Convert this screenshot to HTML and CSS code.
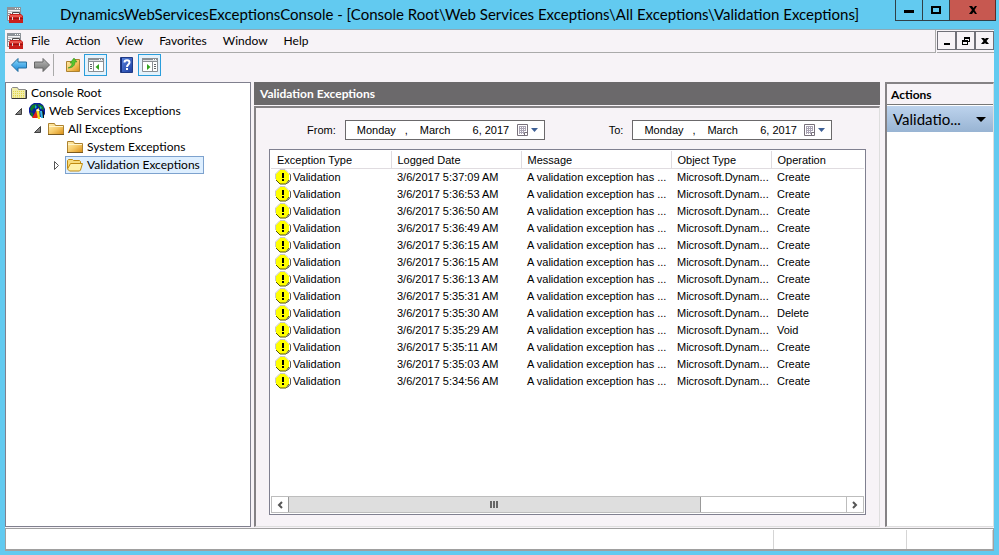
FILE: index.html
```html
<!DOCTYPE html>
<html lang="en">
<head>
<meta charset="utf-8">
<title>DynamicsWebServicesExceptionsConsole</title>
<link rel="stylesheet" href="styles.css">
</head>
<body>
<svg class="defs" aria-hidden="true">
  <defs>
    <linearGradient id="g-folder" x1="0" y1="0" x2="1" y2="1"><stop offset="0" stop-color="#fff0b4"/><stop offset=".5" stop-color="#f6cb6a"/><stop offset="1" stop-color="#d98d14"/></linearGradient>
    <linearGradient id="g-blue" x1="0" y1="0" x2="0" y2="1"><stop offset="0" stop-color="#8fdcfb"/><stop offset="1" stop-color="#1583d8"/></linearGradient>
    <linearGradient id="g-gray" x1="0" y1="0" x2="0" y2="1"><stop offset="0" stop-color="#bdbdbd"/><stop offset="1" stop-color="#6e6e6e"/></linearGradient>
    <linearGradient id="g-help" x1="0" y1="0" x2="1" y2="1"><stop offset="0" stop-color="#5c86e0"/><stop offset="1" stop-color="#1c3da0"/></linearGradient>
    <symbol id="i-console" viewBox="0 0 16 16">
      <path d="M0.500 0.500h13v13h-13z" fill="#f4f4f4" stroke="#8b9096"/>
      <path d="M0 0h14v3H0z" fill="#8d9399"/><path d="M8 1h1v1H8zM10 1h1v1h-1zM12 1h1v1h-1z" fill="#fff"/>
      <path d="M1 4.500h12" stroke="#c4c8cc"/><path d="M1 6.500h3M1 8.500h1" stroke="#8b9096"/>
      <path d="M5.500 8V5.500h7V8" fill="none" stroke="#4b4b4b"/>
      <path d="M3 7h11l2 2v7H2V9z" fill="#c8201c"/><path d="M3 8h11l1 1v1H3z" fill="#e8584e"/>
      <path d="M2 11.500h14" stroke="#9c1210"/><path d="M5 10h1v3H5zM12 10h1v3h-1z" fill="#ddd"/>
    </symbol>
    <symbol id="i-folder" viewBox="0 0 16 16">
      <path d="M0.500 2.500h6l1 2h8v9h-15z" fill="url(#g-folder)" stroke="#ad8230"/><path d="M1 5.500h14" stroke="#fff5cb"/><path d="M0 13.500h16" stroke="#7a5a20"/>
    </symbol>
    <symbol id="i-open" viewBox="0 0 16 16">
      <path d="M0.500 11.500v-8l1-1h4l1 1h6l1 1v3" fill="#f8dc7c" stroke="#c08a10"/>
      <path d="M3.500 6.500h12l-2 6.500-1 1h-10l-2-2z" fill="#fff1a9" stroke="#c08a10"/>
    </symbol>
    <symbol id="i-root" viewBox="0 0 16 16">
      <path d="M0.500 13.500v-10l1-1h5l1 2h7v9z" fill="#f1edaa" stroke="#8a8a8a"/><path d="M1 13.500h14.500V5" fill="none" stroke="#333"/>
      <path d="M2 6.500h12M2 8.500h12M2 10.500h12M2 12h12" stroke="#e1d64b" stroke-dasharray="1 1"/>
    </symbol>
    <symbol id="i-globe" viewBox="0 0 16 16">
      <path d="M5 0h6l3 2 2 4v5l-2 3H4L1 12 0 9V5l2-3z" fill="#0a1f9c"/>
      <path d="M3 2l5-1-1 3-3 2-1 3-2-3zM9 1l5 2 1 4-3-1-3-3zM1 9l3 1v4l-2-1z" fill="#117a28"/>
      <path d="M6 2l2 2-2 2zM11 3l2 2-2 1z" fill="#0bb3d8"/>
      <path d="M3 15l4-7 2 7z" fill="#e42218"/><path d="M7 7l3-2 1 11H9z" fill="#f7dc18"/><path d="M11 8h3v7h-2z" fill="#37bce8"/><path d="M7 7l2-1 2 2H9z" fill="#fff"/><path d="M13 7l2 2v6h-1z" fill="#111"/>
    </symbol>
    <symbol id="i-warn" viewBox="0 0 16 16">
      <path d="M14.500 4.500l1 1.500v5l-3 3.500" fill="none" stroke="#55555a"/>
      <path d="M5 1h5l4 4v6l-4 4H5l-4-4V5z" fill="#ff0"/>
      <path d="M1 11l4 4h6l3-4" fill="none" stroke="#55550a"/><path d="M0.500 10V5L5 0.500h5l3 3" fill="none" stroke="#c8c8c8"/>
      <path d="M7 4h2v5H7zM7 10h2v2H7z" fill="#000"/>
    </symbol>
    <symbol id="i-pane" viewBox="0 0 16 16">
      <path d="M0.500 1.500h15v13h-15z" fill="#fff" stroke="#8a8f94"/><path d="M0 1h16v4H0z" fill="#8a8f94"/><path d="M1 3.500h14" stroke="#dfe2e5"/><path d="M11 2h1v1h-1zM13 2h1v1h-1z" fill="#fff"/>
    </symbol>
    <symbol id="i-cal" viewBox="0 0 12 12">
      <path d="M0.500 0.500h10v11h-10z" fill="#fff" stroke="#77707a"/><path d="M2 2h7v1H2zM2 4h7v1H2zM2 6h7v1H2zM2 8h5v1H2z" fill="#aaa4b4"/><path d="M2 2h1v8H2zM4 2h1v8H4zM6 2h1v8H6zM8 2h1v5H8z" fill="#aaa4b4"/><path d="M7.500 11V8.500H10" fill="none" stroke="#77707a"/>
    </symbol>
    <symbol id="i-left" viewBox="0 0 16 16"><path d="M0.500 8L7 1.500V5h8.500v6H7v3.500z" fill="url(#g-blue)" stroke="#256f9f"/></symbol>
    <symbol id="i-right" viewBox="0 0 16 16"><path d="M15.500 8L9 1.500V5H0.500v6H9v3.500z" fill="url(#g-gray)" stroke="#666"/></symbol>
  </defs>
</svg>
<div class="window">
  <header class="titlebar">
    <svg class="icon"><use href="#i-console"/></svg>
    <h1 class="title">DynamicsWebServicesExceptionsConsole - [Console Root\Web Services Exceptions\All Exceptions\Validation Exceptions]</h1>
    <div class="caption-buttons">
      <button class="cap" aria-label="Minimize"><svg width="12" height="12"><path d="M1 6h10v3H1z"/></svg></button>
      <button class="cap" aria-label="Maximize"><svg width="12" height="12"><path d="M1 2h10v8H1zM3 4v4h6V4z" fill-rule="evenodd"/></svg></button>
      <button class="cap cap-close" aria-label="Close"><svg width="12" height="12"><path d="M2 2h3l1.500 2L8 2h2L7.500 6l2.500 4H8L6.500 8 5 10H2l3-4z"/></svg></button>
    </div>
  </header>
  <div class="frame">
    <div class="menu-row">
      <nav class="menubar" aria-label="Main menu">
        <svg class="icon"><use href="#i-console"/></svg>
        <button>File</button><button>Action</button><button>View</button><button>Favorites</button><button>Window</button><button>Help</button>
      </nav>
      <div class="child-buttons">
        <button aria-label="Minimize child"><svg width="10" height="10"><path d="M2 7h6v2H2z"/></svg></button>
        <button aria-label="Restore child"><svg width="10" height="10"><path d="M3 1h6v5H7V5h1V3H4v1H3zM1 4h6v5H1zM2 6v2h4V6z" fill-rule="evenodd"/></svg></button>
        <button aria-label="Close child"><svg width="10" height="10"><path d="M1 2h3l1 1 1-1h3L6.500 5 9 8H6L5 7 4 8H1l2.500-3z"/></svg></button>
      </div>
    </div>
    <div class="toolbar" role="toolbar" aria-label="Tools">
      <button class="tool" aria-label="Back"><svg class="icon"><use href="#i-left"/></svg></button>
      <button class="tool" aria-label="Forward"><svg class="icon"><use href="#i-right"/></svg></button>
      <span class="divider"></span>
      <button class="tool" aria-label="Up one level"><svg class="icon" viewBox="0 0 16 16"><path d="M1.500 4.500h6l1-2h6v12h-13z" fill="url(#g-folder)" stroke="#ad8230"/><path d="M3 11c3-1 4-3 4-5H5l4-5 3 4h-2c0 4-3 6-7 6z" fill="#55c52e" stroke="#27851b" stroke-width=".5"/></svg></button>
      <button class="tool tool-on" aria-label="Show console tree" aria-pressed="true"><svg class="icon" viewBox="0 0 16 16"><use href="#i-pane"/><path d="M5.500 5v9" stroke="#8a8f94"/><path d="M2 7.500h2M2 9.500h2M2 11.500h2" stroke="#60656a"/><path d="M11 7v6L7.500 10z" fill="#32a51c"/></svg></button>
      <button class="tool" aria-label="Help"><svg class="icon" viewBox="0 0 16 16"><path d="M2.500 0.500h12v15h-12z" fill="url(#g-help)" stroke="#203a85"/><path d="M3 1h1v14H3z" fill="#172f7c"/><path d="M6.500 5.500c0-3 5-3 5 0 0 2-2.500 2-2.500 4.500" fill="none" stroke="#fff" stroke-width="2"/><path d="M8 11h2v2H8z" fill="#fff"/></svg></button>
      <button class="tool tool-on" aria-label="Show action pane" aria-pressed="true"><svg class="icon" viewBox="0 0 16 16"><use href="#i-pane"/><path d="M10.500 5v9" stroke="#8a8f94"/><path d="M12 7.500h2M12 9.500h2M12 11.500h2" stroke="#60656a"/><path d="M5 7v6l3.500-3z" fill="#32a51c"/></svg></button>
    </div>
    <main class="panes">
      <nav class="tree" aria-label="Console tree">
        <button class="node"><svg class="icon"><use href="#i-root"/></svg><span>Console Root</span></button>
        <div class="branch">
          <div class="row"><svg class="twisty" viewBox="0 0 9 9"><path d="M7.500 1.500v6h-6z" fill="#808080" stroke="#404040"/></svg><button class="node"><svg class="icon"><use href="#i-globe"/></svg><span>Web Services Exceptions</span></button></div>
          <div class="branch">
            <div class="row"><svg class="twisty" viewBox="0 0 9 9"><path d="M7.500 1.500v6h-6z" fill="#808080" stroke="#404040"/></svg><button class="node"><svg class="icon"><use href="#i-folder"/></svg><span>All Exceptions</span></button></div>
            <div class="branch">
              <div class="row"><span class="twisty"></span><button class="node"><svg class="icon"><use href="#i-folder"/></svg><span>System Exceptions</span></button></div>
              <div class="row"><svg class="twisty" viewBox="0 0 9 9"><path d="M2.500 0.500v8l4-4z" fill="#fff" stroke="#555"/></svg><button class="node node-on"><svg class="icon"><use href="#i-open"/></svg><span>Validation Exceptions</span></button></div>
            </div>
          </div>
        </div>
      </nav>
      <section class="center">
        <h2 class="band">Validation Exceptions</h2>
        <div class="panel">
          <div class="filters">
            <div class="filter">
              <label for="from-day">From:</label>
              <div class="date">
                <input class="weekday" id="from-day" value="Monday"><span class="comma">,</span><input class="month" aria-label="From month" value="March"><input class="dom" aria-label="From day" value="6,"><input class="year" aria-label="From year" value="2017">
                <button aria-label="Open from calendar"><svg width="12" height="12"><use href="#i-cal"/></svg><svg width="7" height="4"><path d="M0 0h7L3.500 4z" fill="#3d5f95"/></svg></button>
              </div>
            </div>
            <div class="filter">
              <label for="to-day">To:</label>
              <div class="date">
                <input class="weekday" id="to-day" value="Monday"><span class="comma">,</span><input class="month" aria-label="To month" value="March"><input class="dom" aria-label="To day" value="6,"><input class="year" aria-label="To year" value="2017">
                <button aria-label="Open to calendar"><svg width="12" height="12"><use href="#i-cal"/></svg><svg width="7" height="4"><path d="M0 0h7L3.500 4z" fill="#3d5f95"/></svg></button>
              </div>
            </div>
          </div>
          <div class="list">
            <div class="table-area">
            <table>
              <colgroup><col class="c-type"><col class="c-date"><col class="c-msg"><col class="c-obj"><col></colgroup>
              <thead><tr><th>Exception Type</th><th>Logged Date</th><th>Message</th><th>Object Type</th><th>Operation</th></tr></thead>
              <tbody>
                <tr><td><svg class="icon"><use href="#i-warn"/></svg>Validation</td><td>3/6/2017 5:37:09 AM</td><td>A validation exception has ...</td><td>Microsoft.Dynam...</td><td>Create</td></tr>
                <tr><td><svg class="icon"><use href="#i-warn"/></svg>Validation</td><td>3/6/2017 5:36:53 AM</td><td>A validation exception has ...</td><td>Microsoft.Dynam...</td><td>Create</td></tr>
                <tr><td><svg class="icon"><use href="#i-warn"/></svg>Validation</td><td>3/6/2017 5:36:50 AM</td><td>A validation exception has ...</td><td>Microsoft.Dynam...</td><td>Create</td></tr>
                <tr><td><svg class="icon"><use href="#i-warn"/></svg>Validation</td><td>3/6/2017 5:36:49 AM</td><td>A validation exception has ...</td><td>Microsoft.Dynam...</td><td>Create</td></tr>
                <tr><td><svg class="icon"><use href="#i-warn"/></svg>Validation</td><td>3/6/2017 5:36:15 AM</td><td>A validation exception has ...</td><td>Microsoft.Dynam...</td><td>Create</td></tr>
                <tr><td><svg class="icon"><use href="#i-warn"/></svg>Validation</td><td>3/6/2017 5:36:15 AM</td><td>A validation exception has ...</td><td>Microsoft.Dynam...</td><td>Create</td></tr>
                <tr><td><svg class="icon"><use href="#i-warn"/></svg>Validation</td><td>3/6/2017 5:36:13 AM</td><td>A validation exception has ...</td><td>Microsoft.Dynam...</td><td>Create</td></tr>
                <tr><td><svg class="icon"><use href="#i-warn"/></svg>Validation</td><td>3/6/2017 5:35:31 AM</td><td>A validation exception has ...</td><td>Microsoft.Dynam...</td><td>Create</td></tr>
                <tr><td><svg class="icon"><use href="#i-warn"/></svg>Validation</td><td>3/6/2017 5:35:30 AM</td><td>A validation exception has ...</td><td>Microsoft.Dynam...</td><td>Delete</td></tr>
                <tr><td><svg class="icon"><use href="#i-warn"/></svg>Validation</td><td>3/6/2017 5:35:29 AM</td><td>A validation exception has ...</td><td>Microsoft.Dynam...</td><td>Void</td></tr>
                <tr><td><svg class="icon"><use href="#i-warn"/></svg>Validation</td><td>3/6/2017 5:35:11 AM</td><td>A validation exception has ...</td><td>Microsoft.Dynam...</td><td>Create</td></tr>
                <tr><td><svg class="icon"><use href="#i-warn"/></svg>Validation</td><td>3/6/2017 5:35:03 AM</td><td>A validation exception has ...</td><td>Microsoft.Dynam...</td><td>Create</td></tr>
                <tr><td><svg class="icon"><use href="#i-warn"/></svg>Validation</td><td>3/6/2017 5:34:56 AM</td><td>A validation exception has ...</td><td>Microsoft.Dynam...</td><td>Create</td></tr>
              </tbody>
            </table>
            </div>
            <div class="scroll">
              <button aria-label="Scroll left"><svg width="6" height="8"><path d="M5 1L2 4l3 3" fill="none" stroke="#555" stroke-width="2"/></svg></button>
              <div class="track"><div class="thumb"><svg width="8" height="7"><path d="M0 0h2v7H0zM3 0h2v7H3zM6 0h2v7H6z" fill="#666"/></svg></div></div>
              <button aria-label="Scroll right"><svg width="6" height="8"><path d="M1 1l3 3-3 3" fill="none" stroke="#555" stroke-width="2"/></svg></button>
            </div>
          </div>
        </div>
      </section>
      <aside class="actions">
        <h2>Actions</h2>
        <button class="action"><span>Validatio...</span><svg width="10" height="5"><path d="M0 0h10L5 5z"/></svg></button>
      </aside>
    </main>
    <footer class="status"><span></span><span></span><span></span></footer>
  </div>
</div>
</body>
</html>
```
FILE: styles.css
```css
* { box-sizing: border-box; }
body { margin: 0; color: #000; font: 12px/18px Lato, "Open Sans", sans-serif; }
button, input { margin: 0; padding: 0; border: 0; background: none; color: inherit; font: inherit; }
svg { display: block; flex: none; }
h1, h2 { margin: 0; }
.defs { position: absolute; width: 0; height: 0; }
.icon { width: 16px; height: 16px; }
.window { display: flex; flex-direction: column; height: 100vh; padding: 0 5px 4px; background: #62caf0; }
.titlebar { display: flex; align-items: center; height: 29px; padding-left: 2px; }
.title { flex: 1; min-width: 0; padding-left: 37px; font-size: 15px; line-height: 29px; font-weight: 400; white-space: nowrap; overflow: hidden; }
.caption-buttons { display: flex; align-self: flex-start; margin-right: -2px; }
.cap { display: grid; place-items: center; width: 27px; height: 21px; border: 1px solid #303f46; border-top: 0; border-right: 0; }
.cap-close { width: 47px; border-right: 1px solid #5b2a28; background: #c75850; }
.frame { display: flex; flex: 1; flex-direction: column; min-height: 0; border-top: 1px solid #8fa9b5; background: #f7f3f7; }
.menu-row { display: flex; gap: 1px; height: 23px; }
.menubar { display: flex; flex: 1; align-items: center; padding-left: 2px; border-right: 1px solid #aaa; border-bottom: 1px solid #aaa; }
.menubar button { padding: 0 8px; }
.child-buttons { display: flex; padding: 1px 0; border-bottom: 1px solid #aaa; }
.child-buttons button { display: grid; place-items: center; width: 19px; height: 19px; border: 1px solid #707078; }
.toolbar { display: flex; align-items: center; height: 29px; padding: 0 3px 5px 2px; }
.tool { display: grid; place-items: center; width: 23px; height: 22px; }
.tool-on { border: 1px solid #2a9ddb; background: #e4f2fc; }
.divider { width: 1px; height: 22px; margin-right: 7px; background: #aaa; }
.tool-on + .tool { margin: 0 1px 0 7px; }
.panes { display: grid; flex: 1; grid-template-columns: 246px minmax(0, 1fr) 109px; gap: 3px; min-height: 0; }
.tree { padding: 1px 3px; border: 1px solid #80808e; background: #fff; }
.branch .branch { padding-left: 19px; }
.row { display: flex; align-items: center; gap: 4px; padding-left: 5px; }
.twisty { width: 9px; height: 9px; flex: none; }
.node { display: flex; align-items: center; gap: 4px; height: 18px; padding: 0 3px 0 1px; border: 1px solid transparent; white-space: nowrap; }
.node-on { border-color: #7da2ce; background: #deefff; }
.center { display: flex; flex-direction: column; min-width: 0; margin-right: 2px; }
.band { height: 23px; padding-left: 6px; background: #6b696b; color: #fff; font-size: 12px; line-height: 23px; }
.panel { display: flex; flex: 1; flex-direction: column; min-height: 0; margin-top: 1px; padding: 12px 13px 11px; border: 1px solid #dedede; border-top: 2px solid #858285; border-left: 2px solid #858285; }
.filters { display: flex; gap: 64px; margin-bottom: 9px; padding-left: 38px; font: 11px/18px "Liberation Sans", sans-serif; }
.filter { display: flex; align-items: center; gap: 9px; }
.date { display: flex; align-items: center; width: 200px; height: 20px; padding: 0 6px 0 11px; border: 1px solid #6b696b; background: #fff; }
.weekday { width: 48px; }
.comma { width: 15px; }
.month { width: 46px; }
.dom { width: 16px; text-align: right; }
.year { width: 30px; margin-left: 3px; }
.date button { display: flex; align-items: center; gap: 2px; margin-left: auto; }
.list { display: flex; flex: 1; flex-direction: column; min-height: 0; padding: 1px; border: 1px solid #808090; background: #fff; }
.table-area { flex: 1; min-height: 0; overflow: hidden; }
table { width: 100%; border-collapse: collapse; table-layout: fixed; font: 11px/17px "Liberation Sans", sans-serif; }
.c-type { width: 120px; }
.c-date { width: 130px; }
.c-msg { width: 150px; }
.c-obj { width: 100px; }
th, td { height: 17px; padding: 0 0 0 6px; font-weight: 400; text-align: left; white-space: nowrap; }
th { padding-top: 2px; border-right: 1px solid #e0dce0; border-bottom: 1px solid #e0dce0; line-height: 15px; }
th:last-child { border-right: 0; }
td .icon { float: left; margin-left: -2px; margin-right: 2px; }
.scroll { display: flex; height: 17px; border: 1px solid #bdbdbd; }
.scroll button { display: grid; place-items: center; width: 16px; }
.track { flex: 1; border-right: 1px solid #bdbdbd; }
.thumb { display: grid; place-items: center; width: 74%; height: 15px; border: 0 solid #999; border-width: 0 1px; background: #dedede; }
.actions { border: 1px solid #dedede; border-top: 2px solid #858285; border-left: 2px solid #858285; background: #fff; }
.actions h2 { height: 21px; padding-left: 4px; border-bottom: 1px solid #777; background: #f7f3f7; font-size: 12px; line-height: 21px; }
.action { display: flex; align-items: center; justify-content: space-between; width: 100%; height: 26px; margin-top: 1px; padding: 0 7px 0 6px; background: linear-gradient(#bdd3ed, #98b4d3); font-size: 15px; }
.status { display: grid; grid-template-columns: 1fr 133px 86px; height: 23px; margin-top: 1px; border: 1px solid #a0a0a0; border-bottom-width: 2px; background: #fff; }
.status span { margin-top: 1px; border-right: 1px solid #d5d5d5; }
```
